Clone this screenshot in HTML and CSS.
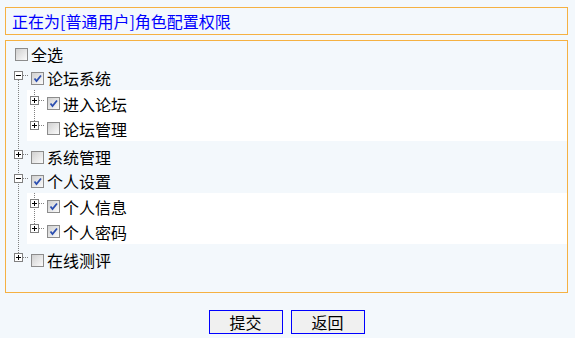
FILE: index.html
```html
<!DOCTYPE html>
<html lang="zh-CN">
<head>
    <meta charset="UTF-8">
    <title>角色权限配置</title>
    <link rel="stylesheet" href="styles.css">
</head>
<body>
    <div class="page">
        <div class="title-box">正在为[普通用户]角色配置权限</div>

        <div class="tree">
            <div class="row all">
                <span class="cb"></span><span class="label">全选</span>
            </div>

            <div class="branch">
                <div class="row">
                    <svg class="exp" width="9" height="9"><rect x="0.5" y="0.5" width="8" height="8" fill="#fff" stroke="#808080"/><path d="M2 4.5h5" stroke="#000"/></svg>
                    <span class="dash"></span>
                    <span class="cb"><svg width="11" height="11"><path d="M2.5 5.5l2 2.5l4.5-5.5" fill="none" stroke="#2b4eb0" stroke-width="1.8"/></svg></span>
                    <span class="label">论坛系统</span>
                </div>
                <div class="children">
                    <div class="row">
                        <svg class="exp" width="9" height="9"><rect x="0.5" y="0.5" width="8" height="8" fill="#fff" stroke="#808080"/><path d="M2 4.5h5M4.5 2v5" stroke="#000"/></svg>
                        <span class="dash"></span>
                        <span class="cb"><svg width="11" height="11"><path d="M2.5 5.5l2 2.5l4.5-5.5" fill="none" stroke="#2b4eb0" stroke-width="1.8"/></svg></span>
                        <span class="label">进入论坛</span>
                    </div>
                    <div class="row">
                        <svg class="exp" width="9" height="9"><rect x="0.5" y="0.5" width="8" height="8" fill="#fff" stroke="#808080"/><path d="M2 4.5h5M4.5 2v5" stroke="#000"/></svg>
                        <span class="dash"></span>
                        <span class="cb"></span>
                        <span class="label">论坛管理</span>
                    </div>
                </div>

                <div class="row">
                    <svg class="exp" width="9" height="9"><rect x="0.5" y="0.5" width="8" height="8" fill="#fff" stroke="#808080"/><path d="M2 4.5h5M4.5 2v5" stroke="#000"/></svg>
                    <span class="dash"></span>
                    <span class="cb"></span>
                    <span class="label">系统管理</span>
                </div>
                <div class="row">
                    <svg class="exp" width="9" height="9"><rect x="0.5" y="0.5" width="8" height="8" fill="#fff" stroke="#808080"/><path d="M2 4.5h5" stroke="#000"/></svg>
                    <span class="dash"></span>
                    <span class="cb"><svg width="11" height="11"><path d="M2.5 5.5l2 2.5l4.5-5.5" fill="none" stroke="#2b4eb0" stroke-width="1.8"/></svg></span>
                    <span class="label">个人设置</span>
                </div>
                <div class="children">
                    <div class="row">
                        <svg class="exp" width="9" height="9"><rect x="0.5" y="0.5" width="8" height="8" fill="#fff" stroke="#808080"/><path d="M2 4.5h5M4.5 2v5" stroke="#000"/></svg>
                        <span class="dash"></span>
                        <span class="cb"><svg width="11" height="11"><path d="M2.5 5.5l2 2.5l4.5-5.5" fill="none" stroke="#2b4eb0" stroke-width="1.8"/></svg></span>
                        <span class="label">个人信息</span>
                    </div>
                    <div class="row">
                        <svg class="exp" width="9" height="9"><rect x="0.5" y="0.5" width="8" height="8" fill="#fff" stroke="#808080"/><path d="M2 4.5h5M4.5 2v5" stroke="#000"/></svg>
                        <span class="dash"></span>
                        <span class="cb"><svg width="11" height="11"><path d="M2.5 5.5l2 2.5l4.5-5.5" fill="none" stroke="#2b4eb0" stroke-width="1.8"/></svg></span>
                        <span class="label">个人密码</span>
                    </div>
                </div>

                <div class="row">
                    <svg class="exp" width="9" height="9"><rect x="0.5" y="0.5" width="8" height="8" fill="#fff" stroke="#808080"/><path d="M2 4.5h5M4.5 2v5" stroke="#000"/></svg>
                    <span class="dash"></span>
                    <span class="cb"></span>
                    <span class="label">在线测评</span>
                </div>
            </div>
        </div>

        <div class="actions">
            <button class="btn">提交</button>
            <button class="btn">返回</button>
        </div>
    </div>
</body>
</html>
```

FILE: styles.css
```css
body {
    margin: 0;
    background-color: #f3f8fc;
    font-family: "Noto Sans CJK SC", "Noto Sans", sans-serif;
    color: #000;
}
.page {
    width: 563px;
    margin: 7px 0 0 5px;
}
.title-box {
    height: 26px;
    line-height: 26px;
    padding-left: 6px;
    border: 1px solid #f5b142;
    color: #0000ff;
    font-size: 16px;
}
.tree {
    margin-top: 5px;
    height: 253px;
    padding: 1px 0 0 8px;
    box-sizing: border-box;
    border: 1px solid #f5b142;
}
.row {
    display: flex;
    align-items: center;
    height: 24px;
}
.row.all {
    padding-left: 1px;
}
.branch {
    position: relative;
}
.branch::before {
    content: "";
    position: absolute;
    left: 4px;
    top: 14px;
    bottom: 19px;
    border-left: 1px dotted #808080;
}
.children {
    position: relative;
    margin: 0 0 4px 13px;
    padding: 1px 0 0 3px;
    background-color: #fff;
}
.children::before {
    content: "";
    position: absolute;
    left: 7px;
    top: 0;
    bottom: 20px;
    border-left: 1px dotted #808080;
}
.children .row {
    height: 25px;
}
.exp {
    position: relative;
    align-self: flex-start;
    margin-top: 5px;
    flex: none;
}
.dash {
    align-self: flex-start;
    margin-top: 9px;
    width: 5px;
    margin-right: 3px;
    border-top: 1px dotted #808080;
}
.cb {
    width: 11px;
    height: 11px;
    flex: none;
    border: 1px solid #8c8c8c;
    background: linear-gradient(135deg, #d0d0d0, #fbfbfb);
    margin-right: 3px;
}
.cb svg {
    display: block;
}
.label {
    font-size: 16px;
    line-height: 20px;
}
.actions {
    display: flex;
    justify-content: center;
    gap: 8px;
    margin-top: 17px;
}
.btn {
    width: 74px;
    height: 24px;
    padding: 0;
    border: 1px solid #0000ff;
    background-color: #f0f0f0;
    font-family: "Noto Sans CJK SC", sans-serif;
    font-size: 16px;
    line-height: 20px;
    color: #000;
}
```
